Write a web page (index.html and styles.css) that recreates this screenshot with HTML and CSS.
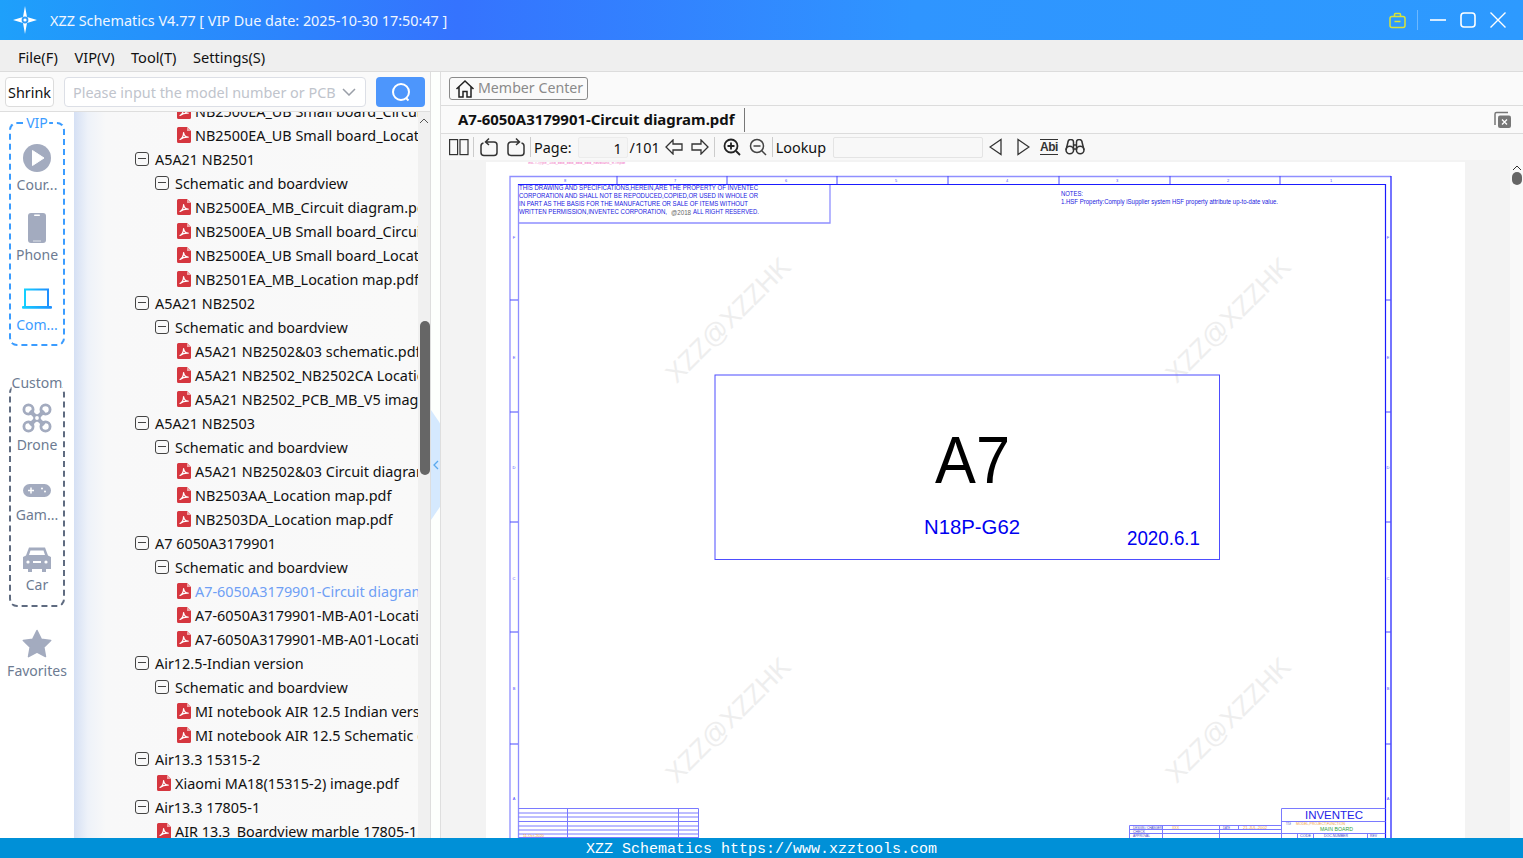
FILE: index.html
```html
<!DOCTYPE html>
<html lang="en">
<head>
<meta charset="utf-8">
<title>XZZ Schematics</title>
<link rel="stylesheet" href="styles.css">
</head>
<body>
<svg class="defs" width="0" height="0">
  <symbol id="pdf" viewBox="0 0 14 16">
    <path d="M1.5 0H10L14 4V14.5A1.5 1.5 0 0 1 12.5 16H1.5A1.5 1.5 0 0 1 0 14.5V1.5A1.5 1.5 0 0 1 1.5 0Z" fill="#d5363f"/>
    <path d="M10 0V4H14Z" fill="#f0a5a8"/>
    <path d="M3 12.5C5 11.5 6.5 8.5 6.6 5.5C7 8.5 8.5 10 11.2 10.2C8.5 10 5.5 10.8 3 12.5Z" fill="none" stroke="#fff" stroke-width="1.2" stroke-linejoin="round"/>
  </symbol>
</svg>
<div class="app">
  <header class="titlebar">
    <svg class="logo" width="26" height="30" viewBox="0 0 26 30"><path d="M13 1L15 12L25 15L15 18L13 29L11 18L1 15L11 12Z" fill="#fff"/><circle cx="13" cy="15" r="3.4" fill="#2f9cf8"/><circle cx="13" cy="15" r="1.6" fill="#fff"/></svg>
    <span class="title">XZZ Schematics V4.77 [ VIP Due date: 2025-10-30 17:50:47 ]</span>
    <div class="winctl">
      <svg width="17" height="17" viewBox="0 0 17 17" fill="none" stroke="#d9e437" stroke-width="1.5"><rect x="1" y="4.5" width="15" height="11" rx="2"/><path d="M5.5 4.5V2.5A1 1 0 0 1 6.5 1.5H10.5A1 1 0 0 1 11.5 2.5V4.5M5.5 9.5H11.5"/></svg>
      <span class="winsep"></span>
      <svg width="16" height="16" viewBox="0 0 16 16" stroke="#fff" stroke-width="1.6"><path d="M0 8H16"/></svg>
      <svg width="16" height="16" viewBox="0 0 16 16" fill="none" stroke="#fff" stroke-width="1.6"><rect x="1" y="1" width="14" height="14" rx="3"/></svg>
      <svg width="16" height="16" viewBox="0 0 16 16" stroke="#fff" stroke-width="1.4"><path d="M0.5 0.5L15.5 15.5M15.5 0.5L0.5 15.5"/></svg>
    </div>
  </header>
  <nav class="menubar">
    <span>File(F)</span><span>VIP(V)</span><span>Tool(T)</span><span>Settings(S)</span>
  </nav>
  <main class="main">
    <section class="left">
      <div class="searchbar">
        <button class="shrink">Shrink</button>
        <div class="select"><span>Please input the model number or PCB</span>
          <svg width="14" height="8" viewBox="0 0 14 8" fill="none" stroke="#9a9fa8" stroke-width="1.5"><path d="M1 1L7 7L13 1"/></svg>
        </div>
        <button class="go"><svg width="20" height="20" viewBox="0 0 20 20" fill="none" stroke="#fff" stroke-width="2"><circle cx="10" cy="10" r="8"/><path d="M15 16L17.5 18.5"/></svg></button>
      </div>
      <div class="leftbody">
        <aside class="sidebar">
          <div class="group vip">
            <span class="grouplabel">VIP</span>
            <div class="sideitem">
              <svg width="28" height="36" viewBox="0 0 28 36"><circle cx="14" cy="18" r="14" fill="#a3abbf"/><path d="M9.500 10.500L21 18L9.500 25.500Z" fill="#fff" stroke="#fff" stroke-linejoin="round"/></svg>
              <span>Cour...</span>
            </div>
            <div class="sideitem">
              <svg width="18" height="36" viewBox="0 0 18 36"><rect y="3" width="18" height="30" rx="3" fill="#a3abbf"/><rect x="6" y="4.500" width="6" height="1.400" rx=".7" fill="#fff"/><rect x="5" y="30.500" width="8" height="1" fill="#dfe3ea"/></svg>
              <span>Phone</span>
            </div>
            <div class="sideitem active">
              <svg width="32" height="36" viewBox="0 0 32 36"><defs><linearGradient id="lap" x1="0" y1="0" x2="1" y2="0"><stop offset="0" stop-color="#14d0ff"/><stop offset="1" stop-color="#1f8fff"/></linearGradient></defs><path d="M4 27V9.500H27V27" fill="none" stroke="url(#lap)" stroke-width="2"/><rect x="1" y="26" width="30" height="2.800" rx="1" fill="url(#lap)"/></svg>
              <span>Com...</span>
            </div>
          </div>
          <div class="group custom">
            <span class="grouplabel">Custom</span>
            <div class="sideitem">
              <svg width="30" height="36" viewBox="0 0 30 36" fill="none" stroke="#a3abbf"><g stroke-width="2.800"><circle cx="6.500" cy="9.500" r="4.600"/><circle cx="23.500" cy="9.500" r="4.600"/><circle cx="6.500" cy="26.500" r="4.600"/><circle cx="23.500" cy="26.500" r="4.600"/></g><path d="M8 11L22 25M22 11L8 25" stroke-width="4"/><circle cx="15" cy="18" r="2.800" fill="#fff" stroke-width="1.800"/></svg>
              <span>Drone</span>
            </div>
            <div class="sideitem">
              <svg width="28" height="36" viewBox="0 0 28 36"><rect y="14" width="28" height="13" rx="6.500" fill="#a3abbf"/><path d="M5 20.500H11M8 17.500V23.500" stroke="#fff" stroke-width="1.500"/><circle cx="19" cy="18.500" r="1" fill="#fff"/><circle cx="22" cy="21.500" r="1" fill="#fff"/></svg>
              <span>Gam...</span>
            </div>
            <div class="sideitem">
              <svg width="28" height="36" viewBox="0 0 28 36"><g transform="translate(0 1)"><path d="M6 6.500H22L25 14.500L28 16V28H23V31H19V28H9V31H5V28H0V16L3 14.500Z" fill="#a3abbf"/><path d="M7.500 9.500H20.500L22 14H6Z" fill="#fff"/><rect x="10" y="20" width="8" height="2" fill="#fff"/><circle cx="5" cy="21" r="1.600" fill="#fff"/><circle cx="23" cy="21" r="1.600" fill="#fff"/></g></svg>
              <span>Car</span>
            </div>
          </div>
          <div class="sideitem favorites">
            <svg width="30" height="36" viewBox="0 0 30 36"><path d="M15 4.500L19.200 13.200L28.700 14.500L21.800 21.100L23.500 30.600L15 26L6.500 30.600L8.200 21.100L1.300 14.500L10.800 13.200Z" fill="#a3abbf" stroke="#a3abbf" stroke-linejoin="round" stroke-width="1.500"/></svg>
            <span>Favorites</span>
          </div>
        </aside>
        <div class="treewrap">
          <ul class="tree">
            <li class="f"><svg class="pdf"><use href="#pdf"/></svg>NB2500EA_UB Small board_Circuit diagram.pdf</li>
            <li class="f"><svg class="pdf"><use href="#pdf"/></svg>NB2500EA_UB Small board_Location map.pdf</li>
            <li class="l0"><i class="ex"></i>A5A21 NB2501</li>
            <li class="l1"><i class="ex"></i>Schematic and boardview</li>
            <li class="f"><svg class="pdf"><use href="#pdf"/></svg>NB2500EA_MB_Circuit diagram.pdf</li>
            <li class="f"><svg class="pdf"><use href="#pdf"/></svg>NB2500EA_UB Small board_Circuit diagram.pdf</li>
            <li class="f"><svg class="pdf"><use href="#pdf"/></svg>NB2500EA_UB Small board_Location map.pdf</li>
            <li class="f"><svg class="pdf"><use href="#pdf"/></svg>NB2501EA_MB_Location map.pdf</li>
            <li class="l0"><i class="ex"></i>A5A21 NB2502</li>
            <li class="l1"><i class="ex"></i>Schematic and boardview</li>
            <li class="f"><svg class="pdf"><use href="#pdf"/></svg>A5A21 NB2502&amp;03 schematic.pdf</li>
            <li class="f"><svg class="pdf"><use href="#pdf"/></svg>A5A21 NB2502_NB2502CA Location map.pdf</li>
            <li class="f"><svg class="pdf"><use href="#pdf"/></svg>A5A21 NB2502_PCB_MB_V5 image.pdf</li>
            <li class="l0"><i class="ex"></i>A5A21 NB2503</li>
            <li class="l1"><i class="ex"></i>Schematic and boardview</li>
            <li class="f"><svg class="pdf"><use href="#pdf"/></svg>A5A21 NB2502&amp;03 Circuit diagram.pdf</li>
            <li class="f"><svg class="pdf"><use href="#pdf"/></svg>NB2503AA_Location map.pdf</li>
            <li class="f"><svg class="pdf"><use href="#pdf"/></svg>NB2503DA_Location map.pdf</li>
            <li class="l0"><i class="ex"></i>A7 6050A3179901</li>
            <li class="l1"><i class="ex"></i>Schematic and boardview</li>
            <li class="f sel"><svg class="pdf"><use href="#pdf"/></svg>A7-6050A3179901-Circuit diagram.pdf</li>
            <li class="f"><svg class="pdf"><use href="#pdf"/></svg>A7-6050A3179901-MB-A01-Location map.pdf</li>
            <li class="f"><svg class="pdf"><use href="#pdf"/></svg>A7-6050A3179901-MB-A01-Location map.pdf</li>
            <li class="l0"><i class="ex"></i>Air12.5-Indian version</li>
            <li class="l1"><i class="ex"></i>Schematic and boardview</li>
            <li class="f"><svg class="pdf"><use href="#pdf"/></svg>MI notebook AIR 12.5 Indian version.pdf</li>
            <li class="f"><svg class="pdf"><use href="#pdf"/></svg>MI notebook AIR 12.5 Schematic diagram.pdf</li>
            <li class="l0"><i class="ex"></i>Air13.3 15315-2</li>
            <li class="g"><svg class="pdf"><use href="#pdf"/></svg>Xiaomi MA18(15315-2) image.pdf</li>
            <li class="l0"><i class="ex"></i>Air13.3 17805-1</li>
            <li class="g"><svg class="pdf"><use href="#pdf"/></svg>AIR 13.3_Boardview marble 17805-1.pdf</li>
          </ul>
        </div>
        <div class="treescroll">
          <svg class="uparrow" width="10" height="6" viewBox="0 0 10 6" fill="none" stroke="#555"><path d="M1 5L5 1L9 5"/></svg>
          <div class="thumb"></div>
        </div>
      </div>
    </section>
    <div class="gutter">
      <div class="handle"><svg width="6" height="10" viewBox="0 0 6 10" fill="none" stroke="#5aa9ef" stroke-width="1.300"><path d="M5 1L1 5L5 9"/></svg></div>
    </div>
    <section class="right">
      <div class="memberrow">
        <button class="member">
          <svg width="20" height="20" viewBox="0 0 20 20" fill="none" stroke="#222" stroke-width="1.500"><path d="M1.500 10L10 2L18.500 10M4 8V18H8V12.500H12V18H16V8"/></svg>
          <span>Member Center</span>
        </button>
      </div>
      <div class="tabrow">
        <span class="tab">A7-6050A3179901-Circuit diagram.pdf</span>
        <svg class="closeall" width="18" height="18" viewBox="0 0 18 18"><path d="M14 1.500H2.500A1.500 1.500 0 0 0 1 3V14" fill="none" stroke="#777" stroke-width="1.500"/><rect x="4" y="4.500" width="13" height="12.500" rx="2" fill="#777"/><path d="M8 8.500L13 13.500M13 8.500L8 13.500" stroke="#fff" stroke-width="1.300"/></svg>
      </div>
      <div class="toolbar">
        <svg width="20" height="18" viewBox="0 0 20 18" fill="none" stroke="#333" stroke-width="1.200"><rect x=".6" y="1.600" width="8" height="15"/><rect x="11" y="1.600" width="8" height="15"/></svg>
        <i class="sep sep1"></i>
        <svg width="18" height="20" viewBox="0 0 18 20" fill="none" stroke="#333" stroke-width="1.500"><path d="M6 5H14A3 3 0 0 1 17 8M1 8.500V15.500A3 3 0 0 0 4 18.500H14A3 3 0 0 0 17 15.500V8M1 9A3 3 0 0 1 3.500 6M9 1.500L5.500 5L9 8"/></svg>
        <svg class="t-rot" width="18" height="20" viewBox="0 0 18 20" fill="none" stroke="#333" stroke-width="1.500"><path d="M12 5H4A3 3 0 0 0 1 8V15.500A3 3 0 0 0 4 18.500H14A3 3 0 0 0 17 15.500V9A3 3 0 0 0 14.500 6M9 1.500L12.500 5L9 8"/></svg>
        <i class="sep sep2"></i>
        <span class="t-page">Page:</span>
        <span class="pageinput">1</span>
        <span class="t-total">/101</span>
        <svg class="t-prev" width="18" height="16" viewBox="0 0 18 16" fill="none" stroke="#333" stroke-width="1.300"><path d="M8 1L1 8L8 15V11H17V5H8Z"/></svg>
        <svg class="t-next" width="18" height="16" viewBox="0 0 18 16" fill="none" stroke="#333" stroke-width="1.300"><path d="M10 1L17 8L10 15V11H1V5H10Z"/></svg>
        <i class="sep"></i>
        <svg class="t-zin" width="18" height="18" viewBox="0 0 18 18" fill="none" stroke="#222" stroke-width="1.800"><circle cx="8" cy="8" r="6.500"/><path d="M13 13L17 17M4.500 8H11.500M8 4.500V11.500"/></svg>
        <svg class="t-zout" width="18" height="18" viewBox="0 0 18 18" fill="none" stroke="#444" stroke-width="1.500"><circle cx="8" cy="8" r="6.500"/><path d="M13 13L17 17M4.500 8H11.500"/></svg>
        <i class="sep sep2"></i>
        <span class="t-lookup">Lookup</span>
        <span class="lookupinput"></span>
        <svg class="t-tri1" width="13" height="18" viewBox="0 0 13 18" fill="none" stroke="#333" stroke-width="1.300"><path d="M12 1.500V16.500L1 9Z"/></svg>
        <svg class="t-tri2" width="13" height="18" viewBox="0 0 13 18" fill="none" stroke="#333" stroke-width="1.300"><path d="M1 1.500V16.500L12 9Z"/></svg>
        <span class="abi">Abi</span>
        <svg class="t-bino" width="20" height="16" viewBox="0 0 20 16" fill="none" stroke="#333" stroke-width="1.500"><path d="M1 11L3 3A2.500 2.500 0 0 1 8.500 3.500V11M19 11L17 3A2.500 2.500 0 0 0 11.500 3.500V11M8.500 6H11.500M8.500 10H11.500"/><circle cx="4.800" cy="11" r="3.800"/><circle cx="15.200" cy="11" r="3.800"/></svg>
      </div>
      <div class="viewer">
        <div class="viewarea">
          <div class="page">
            <svg class="sheet" width="979" height="676" viewBox="486 162 979 676">
              <text class="pink" x="528" y="163.500" textLength="97" lengthAdjust="spacingAndGlyphs">Ink-T-@pe_18d_bbd_bbd_bbd_bbd_nbvblank_fr.#npdf</text>
              <g class="wm">
                <text transform="translate(728 320) rotate(-45)">XZZ@XZZHK</text>
                <text transform="translate(1228 320) rotate(-45)">XZZ@XZZHK</text>
                <text transform="translate(728 720) rotate(-45)">XZZ@XZZHK</text>
                <text transform="translate(1228 720) rotate(-45)">XZZ@XZZHK</text>
              </g>
              <g fill="none" stroke="#8f8fff" stroke-width="1.300">
                <path d="M510 860V176.500H1391"/>
                <path d="M518.500 860V184"/>
                <path d="M518.500 223H830V184"/>
              </g>
              <path d="M518 184.500H1385.500V860M1391 176V860" fill="none" stroke="#1a1aff" stroke-width="1.200"/>
              <path d="M617 176V184M727 176V184M837 176V184M948 176V184M1059 176V184M1170 176V184M1280 176V184M510 300H518M510 412H518M510 522H518M510 632H518M510 744H518M1386 300H1391M1386 412H1391M1386 522H1391M1386 632H1391M1386 744H1391" stroke="#4a4aff" fill="none"/>
              <g class="tick">
                <text x="565" y="182">8</text><text x="675" y="182">7</text><text x="786" y="182">6</text><text x="896" y="182">5</text><text x="1007" y="182">4</text><text x="1117" y="182">3</text><text x="1228" y="182">2</text><text x="1331" y="182">1</text>
                <text x="514" y="239">F</text><text x="514" y="359">E</text><text x="514" y="469">D</text><text x="514" y="580">C</text><text x="514" y="690">B</text><text x="514" y="800">A</text>
                <text x="1388" y="239">F</text><text x="1388" y="359">E</text><text x="1388" y="469">D</text><text x="1388" y="580">C</text><text x="1388" y="690">B</text><text x="1388" y="800">A</text>
              </g>
              <g class="note">
                <text x="519" y="190" textLength="239" lengthAdjust="spacingAndGlyphs">THIS DRAWING AND SPECIFICATIONS,HEREIN,ARE THE PROPERTY OF INVENTEC</text>
                <text x="519" y="198" textLength="239" lengthAdjust="spacingAndGlyphs">CORPORATION AND SHALL NOT BE REPODUCED,COPIED,OR USED IN WHOLE OR</text>
                <text x="519" y="206" textLength="229" lengthAdjust="spacingAndGlyphs">IN PART AS THE BASIS FOR THE MANUFACTURE OR SALE OF ITEMS WITHOUT</text>
                <text x="519" y="214" textLength="148" lengthAdjust="spacingAndGlyphs">WRITTEN PERMISSION,INVENTEC CORPORATION,</text>
                <text x="671" y="214.500" class="gray" textLength="20" lengthAdjust="spacingAndGlyphs">@2018</text>
                <text x="693" y="214" textLength="66" lengthAdjust="spacingAndGlyphs">ALL RIGHT RESERVED.</text>
                <text x="1061" y="196" textLength="22" lengthAdjust="spacingAndGlyphs">NOTES:</text>
                <text x="1061" y="204" textLength="217" lengthAdjust="spacingAndGlyphs">1.HSF Property:Comply iSupplier system HSF property attribute up-to-date value.</text>
              </g>
              <rect x="715" y="375" width="504.500" height="184.500" fill="none" stroke="#4d4dff" stroke-width="1"/>
              <text class="big" x="935" y="483" textLength="75" lengthAdjust="spacingAndGlyphs">A7</text>
              <text class="blue20" x="924" y="534" textLength="96" lengthAdjust="spacingAndGlyphs">N18P-G62</text>
              <text class="blue20" x="1127" y="545" textLength="73" lengthAdjust="spacingAndGlyphs">2020.6.1</text>
              <g fill="none" stroke="#7a7aff" stroke-width="1">
                <path d="M518.500 808.500H698.500V840M518.500 813H698.500M518.500 817H698.500M518.500 821.500H698.500M518.500 826H698.500M518.500 830H698.500M518.500 834H698.500M518.500 837.500H698.500M567.500 808.500V840M678.500 808.500V840"/>
                <path d="M1281.500 840V808.500H1385.500M1281.500 821.500H1385.500M1281.500 833.500H1385.500M1129.500 840V825.500H1281.500M1129.500 829.500H1281.500M1129.500 833.500H1281.500M1162.500 825.500V840M1219.500 825.500V840M1238.500 825.500V829.500M1297.500 833.500V840M1313.500 833.500V840M1367.500 833.500V840"/>
              </g>
              <text class="inv" x="1305" y="819" textLength="58" lengthAdjust="spacingAndGlyphs">INVENTEC</text>
              <text class="orange" x="1296" y="825" textLength="49" lengthAdjust="spacingAndGlyphs">MODEL,PROJECT,FUNCTION</text>
              <text class="green" x="1320" y="831" textLength="33" lengthAdjust="spacingAndGlyphs">MAIN BOARD</text>
              <text class="orange" x="1172" y="829" textLength="7" lengthAdjust="spacingAndGlyphs">XXX</text>
              <text class="orange" x="1243" y="829" textLength="24" lengthAdjust="spacingAndGlyphs">21-JUL-2002</text>
              <text class="orange" x="523" y="837" textLength="21" lengthAdjust="spacingAndGlyphs">11-Oct-2020</text>
              <text class="tiny" x="1133" y="829" textLength="29" lengthAdjust="spacingAndGlyphs">DESIGN / CHANGER</text>
              <text class="tiny" x="1133" y="832.500" textLength="12" lengthAdjust="spacingAndGlyphs">CHECK</text>
              <text class="tiny" x="1133" y="836.500" textLength="17" lengthAdjust="spacingAndGlyphs">APPROVAL</text>
              <text class="tiny" x="1223" y="829" textLength="7" lengthAdjust="spacingAndGlyphs">DATE</text>
              <text class="tiny" x="1286" y="825" textLength="5" lengthAdjust="spacingAndGlyphs">TITLE</text>
              <text class="tiny" x="1300" y="837" textLength="11" lengthAdjust="spacingAndGlyphs">CODE</text>
              <text class="tiny" x="1324" y="837" textLength="24" lengthAdjust="spacingAndGlyphs">DOC.NUMBER</text>
              <text class="tiny" x="1370" y="837" textLength="7" lengthAdjust="spacingAndGlyphs">REV</text>
            </svg>
          </div>
        </div>
        <div class="viewscroll">
          <svg width="10" height="6" viewBox="0 0 10 6" fill="none" stroke="#333"><path d="M1 5L5 1L9 5"/></svg>
          <div class="vthumb"></div>
        </div>
      </div>
    </section>
  </main>
  <footer class="footer">XZZ Schematics https://www.xzztools.com</footer>
</div>
</body>
</html>
```

FILE: styles.css
```css
* { box-sizing: border-box; }
html, body { margin: 0; padding: 0; height: 100%; overflow: hidden; }
body { font-family: "Noto Sans", "Open Sans", sans-serif; font-size: 14.4px; color: #111; background: #fff; }
.defs { position: absolute; }
.app { display: flex; flex-direction: column; width: 1523px; height: 858px; }

.titlebar { flex: 0 0 40px; display: flex; align-items: center; padding: 0 17px 0 12px; color: #fff;
  background: linear-gradient(90deg, #1ea0fb 0, #3573fe 30%, #2f95ff 60%, #2d9aff 100%); }
.logo { flex: none; }
.title { margin-left: 12px; color: #f0f6ff; }
.winctl { margin-left: auto; display: flex; align-items: center; gap: 14px; }
.winsep { width: 1px; height: 20px; background: #6db8ff; margin: 0 -2px 0 -3px; }

.menubar { flex: 0 0 32px; display: flex; align-items: center; gap: 16.500px; padding: 2px 0 0 18px; font-size: 14.600px; background: #efefef; border-bottom: 1px solid #dcdcdc; }

.main { flex: 1; display: flex; min-height: 0; }
.left { flex: 0 0 431px; display: flex; flex-direction: column; border-right: 1px solid #dedede; background: #fff; }
.searchbar { flex: 0 0 40px; display: flex; align-items: flex-start; padding: 5px 5px 0; background: #fafafa; border-bottom: 1px solid #dedede; }
.shrink { width: 49px; height: 30px; padding: 0; font: inherit; color: #111; background: #fff; border: 1px solid #dcdcdc; border-radius: 4px; }
.select { width: 302px; height: 30px; margin-left: 10px; display: flex; align-items: center; justify-content: space-between; padding: 0 9px 0 8px; color: #c0c4cc; background: #fff; border: 1px solid #dcdfe6; border-radius: 4px; white-space: nowrap; overflow: hidden; }
.go { width: 49px; height: 30px; margin-left: 10px; padding: 0; display: flex; align-items: center; justify-content: center; background: #4d96fc; border: 0; border-radius: 4px; }

.leftbody { flex: 1; display: flex; min-height: 0; }
.sidebar { flex: 0 0 74px; display: flex; flex-direction: column; align-items: center; padding-top: 10px; background: #fff; font-size: 14px; color: #6d7b92; }
.group { position: relative; width: 56px; height: 224px; border: 2px dashed #3b9cff; border-radius: 8px; padding-top: 16px; display: flex; flex-direction: column; align-items: center; }
.group.custom { height: 222px; margin-top: 39px; padding-top: 13px; border-color: #5f6b80; }
.grouplabel { position: absolute; top: -10px; left: 50%; transform: translateX(-50%); background: #fff; line-height: 18px; white-space: nowrap; }
.vip .grouplabel { color: #3b9cff; padding: 0 1px; }
.custom .grouplabel { top: -13px; }
.sideitem { flex: 0 0 70px; width: 100%; display: flex; flex-direction: column; align-items: center; }
.sideitem svg { flex: none; }
.sideitem span { line-height: 20px; margin-top: -1px; white-space: nowrap; }
.sideitem.active { color: #3b9cff; }
.favorites { margin-top: 19px; }

.treewrap { flex: 0 0 344px; overflow: hidden; background: linear-gradient(90deg, #d5e0f4 0, #eef2f9 14px, #f8f8f9 32px, #f9f9f9 100%); }
.tree { list-style: none; margin: -13px 0 0; padding: 0; }
.tree li { height: 24px; display: flex; align-items: center; white-space: nowrap; color: #111; }
.l0 { padding-left: 61px; }
.l1 { padding-left: 81px; }
.f { padding-left: 103px; }
.g { padding-left: 83px; }
.sel.sel { color: #6f9ff5; }
.ex { flex: none; width: 14px; height: 14px; margin-right: 6px; border: 1.300px solid #444; border-radius: 3px; position: relative; }
.ex::before { content: ""; position: absolute; left: 2px; right: 2px; top: 5px; height: 1.300px; background: #444; }
.pdf { flex: none; width: 14px; height: 16px; margin-right: 4px; }
.treescroll { flex: 1; position: relative; background: #f0f0f0; }
.uparrow { position: absolute; left: 1px; top: 6px; }
.thumb { position: absolute; left: 2px; top: 209px; width: 10px; height: 154px; border-radius: 5px; background: #666; }

.gutter { flex: 0 0 10px; position: relative; background: #fdfffd; border-right: 1px solid #dedede; }
.handle { position: absolute; left: 0; top: 338px; width: 9px; height: 110px; display: flex; align-items: center; justify-content: center; background: #d5e9fe; clip-path: polygon(0 0, 100% 12%, 100% 88%, 0 100%); }

.right { flex: 1; display: flex; flex-direction: column; min-width: 0; }
.memberrow { flex: 0 0 34px; display: flex; align-items: flex-start; padding: 5px 0 0 8px; background: #fafafa; border-bottom: 1px solid #dcdcdc; }
.member { height: 23px; width: 139px; padding: 0 0 0 5px; display: flex; align-items: center; gap: 3px; font: inherit; font-size: 14.200px; color: #8a8a8a; background: #fafafa; border: 1px solid #8a8a8a; border-radius: 3px; white-space: nowrap; }
.member span { margin-top: -2px; }
.tabrow { flex: 0 0 28px; display: flex; align-items: center; padding: 0 11px 0 17px; background: #fafafa; border-bottom: 1px solid #dcdcdc; }
.tab { font-size: 14.950px; font-weight: 700; padding-right: 9px; height: 24px; line-height: 22px; border-right: 1px solid #777; color: #111; }
.closeall { margin-left: auto; }
.toolbar { flex: 0 0 26px; display: flex; align-items: center; padding-left: 8px; background: #f8f8f8; }
.toolbar svg { flex: none; }
.sep { flex: none; width: 1px; height: 20px; background: #ccc; margin: 0 6px 0 5px; }
.sep1 { margin-left: 4px; }
.sep2 { margin-right: 3px; }
.t-rot { margin-left: 9px; }
.pageinput { width: 50px; height: 21px; margin: 0 2px 0 6px; padding-right: 5px; line-height: 21px; text-align: right; background: #f5f5f5; border: 1px solid #ececec; border-radius: 2px; }
.t-prev { margin-left: 5px; }
.t-next { margin-left: 8px; }
.t-zin { margin-left: 2px; }
.t-zout { margin-left: 8px; }
.lookupinput { width: 150px; height: 21px; margin-left: 7px; background: #f8f8f8; border: 1px solid #e4e4e4; border-radius: 2px; }
.t-tri1 { margin-left: 6px; }
.t-tri2 { margin-left: 15px; }
.abi { margin-left: 10px; width: 18px; font: 700 12px/14px "Liberation Sans", sans-serif; letter-spacing: -.5px; color: #333; border-top: 1px solid #333; border-bottom: 1px solid #333; }
.t-bino { margin-left: 7px; }

.viewer { flex: 1; display: flex; min-height: 0; }
.viewarea { flex: 1; padding: 2px 45px 0; background: #f3f3f3; overflow: hidden; }
.page { width: 979px; height: 100%; background: #fff; }
.sheet { display: block; font-family: "Liberation Sans", sans-serif; }
.viewscroll { flex: 0 0 13px; position: relative; background: #f9f9f9; display: flex; flex-direction: column; align-items: center; padding-top: 5px; }
.vthumb { width: 10px; height: 13px; margin-top: 1px; border-radius: 5px; background: #666; }

.pink { font-size: 3px; fill: #f070c0; }
.wm text { font-size: 26.500px; text-anchor: middle; dominant-baseline: central; fill: #eeeeee; }
.tick text { font-size: 4px; fill: #4a4aff; text-anchor: middle; }
.note text { font-size: 6.500px; fill: #2020e0; }
.note text.gray { fill: #666; }
.big { font-size: 66px; fill: #000; }
.blue20 { font-size: 20px; fill: #0000f0; }
.inv { font-size: 11px; fill: #2222e8; }
.orange { font-size: 4px; fill: #f0a040; }
.green { font-size: 6px; fill: #30a040; }
.tiny { font-size: 3.500px; fill: #4444c0; }

.footer { flex: 0 0 20px; display: flex; align-items: center; justify-content: center; padding-top: 4px; background: #0090d7; color: #fff; font: 15px/16px "Liberation Mono", monospace; overflow: hidden; }
```
